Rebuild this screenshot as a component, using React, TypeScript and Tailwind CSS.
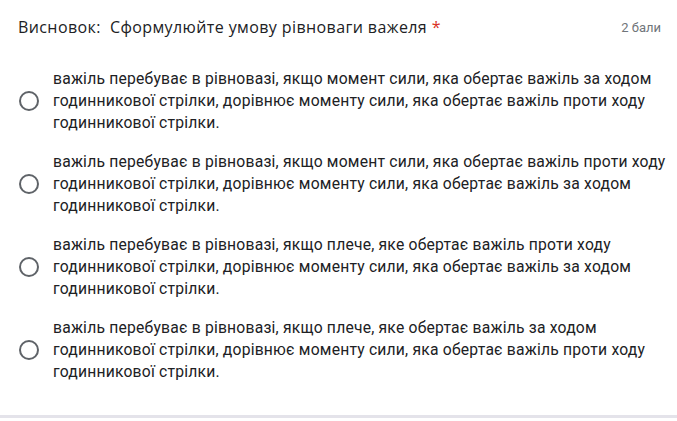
import React from "react";

const options = [
  [
    "важіль перебуває в рівновазі, якщо момент сили, яка обертає важіль за ходом",
    "годинникової стрілки, дорівнює моменту сили, яка обертає важіль проти ходу",
    "годинникової стрілки.",
  ],
  [
    "важіль перебуває в рівновазі, якщо момент сили, яка обертає важіль проти ходу",
    "годинникової стрілки, дорівнює моменту сили, яка обертає важіль за ходом",
    "годинникової стрілки.",
  ],
  [
    "важіль перебуває в рівновазі, якщо плече, яке обертає важіль проти ходу",
    "годинникової стрілки, дорівнює моменту сили, яка обертає важіль за ходом",
    "годинникової стрілки.",
  ],
  [
    "важіль перебуває в рівновазі, якщо плече, яке обертає важіль за ходом",
    "годинникової стрілки, дорівнює моменту сили, яка обертає важіль проти ходу",
    "годинникової стрілки.",
  ],
];

export default function App() {
  return (
    <div className="w-[677px] h-[421px] bg-white overflow-hidden flex flex-col" style={{ fontFamily: "Roboto, 'Noto Sans', sans-serif" }}>
      <div className="h-[418px] border-b-[3px] border-[#e4e3ea] flex flex-col">
        <div className="flex items-start justify-between pl-[18px] pr-[16px] pt-[15px]">
          <div className="text-[16px] leading-[24px] text-[#202124] tracking-[0.4px] whitespace-nowrap" style={{ fontFamily: "'Open Sans', Roboto, sans-serif" }}>
            Висновок:&nbsp; Сформулюйте умову рівноваги важеля <span className="text-[#d93025]">*</span>
          </div>
          <div className="text-[13px] leading-[16px] text-[#70757a] pt-[5px]">2 бали</div>
        </div>
        <div className="flex flex-col gap-[17px] pt-[29px]">
          {options.map((lines, i) => (
            <div key={i} className="flex items-center">
              <div className="w-[53px] shrink-0 flex justify-start pl-[19px]">
                <div className="w-[20px] h-[20px] rounded-full border-2 border-[#5f6368]" />
              </div>
              <div className="text-[15.7px] leading-[22px] text-[#202124] tracking-[0.2px] whitespace-nowrap">
                {lines.map((l, j) => (
                  <div key={j}>{l}</div>
                ))}
              </div>
            </div>
          ))}
        </div>
      </div>
    </div>
  );
}
